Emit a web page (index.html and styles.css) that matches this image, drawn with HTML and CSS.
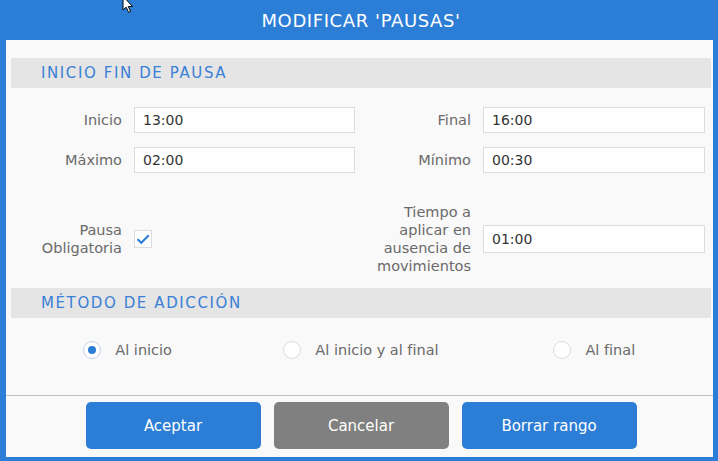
FILE: index.html
```html
<!DOCTYPE html>
<html lang="es">
<head>
<meta charset="utf-8">
<title>Modificar 'Pausas'</title>
<link rel="stylesheet" href="styles.css">
</head>
<body>
<div class="dialog">
  <header class="dialog-header">MODIFICAR 'PAUSAS'</header>
  <div class="dialog-body">
    <div class="section-bar">INICIO FIN DE PAUSA</div>
    <div class="form-grid">
      <label class="lbl">Inicio</label>
      <input class="field" type="text" value="13:00">
      <label class="lbl">Final</label>
      <input class="field" type="text" value="16:00">

      <label class="lbl">Máximo</label>
      <input class="field" type="text" value="02:00">
      <label class="lbl">Mínimo</label>
      <input class="field" type="text" value="00:30">

      <label class="lbl row3">Pausa<br>Obligatoria</label>
      <div class="row3 check-cell">
        <span class="checkbox">
          <svg width="16" height="16" viewBox="0 0 16 16"><path d="M2.5 8.2 L6.3 11.8 L13.8 4.3" fill="none" stroke="#2b7dd5" stroke-width="2"/></svg>
        </span>
      </div>
      <label class="lbl row3 tall">Tiempo a aplicar en ausencia de movimientos</label>
      <input class="field field-tall row3" type="text" value="01:00">
    </div>

    <div class="section-bar second">MÉTODO DE ADICCIÓN</div>
    <div class="radio-row">
      <div class="radio-cell"><span class="radio checked"></span><span class="radio-label">Al inicio</span></div>
      <div class="radio-cell"><span class="radio"></span><span class="radio-label">Al inicio y al final</span></div>
      <div class="radio-cell"><span class="radio"></span><span class="radio-label">Al final</span></div>
    </div>
  </div>
  <footer class="dialog-footer">
    <button class="btn btn-blue">Aceptar</button>
    <button class="btn btn-gray">Cancelar</button>
    <button class="btn btn-blue">Borrar rango</button>
  </footer>
</div>
<svg class="cursor" width="14" height="16" viewBox="0 0 14 16"><path d="M1 -4 L1 10 L4.2 7.2 L6.6 12.4 L8.6 11.5 L6.3 6.5 L10.5 6.5 Z" fill="#fff" stroke="#000" stroke-width="1"/></svg>
</body>
</html>
```
FILE: styles.css
```css
* { box-sizing: border-box; }
html, body { margin: 0; padding: 0; }
body {
  width: 718px;
  height: 461px;
  font-family: "DejaVu Sans", "Liberation Sans", sans-serif;
  background: #2b7dd5;
  position: relative;
  overflow: hidden;
}
.dialog {
  width: 718px;
  height: 461px;
  background: #2b7dd5;
  padding: 0 5px 4px 6px;
  display: flex;
  flex-direction: column;
}
.dialog-header {
  height: 40px;
  flex: none;
  display: flex;
  align-items: center;
  justify-content: center;
  color: #fff;
  font-size: 18px;
  letter-spacing: 0.6px;
  padding-left: 3px;
}
.dialog-body {
  background: #f9f9f9;
  padding: 18px 2px 0 5px;
  flex: none;
  height: 356px;
  border-bottom: 1px solid #c2c2c2;
}
.section-bar {
  height: 30px;
  background: #e5e5e5;
  color: #3a80d6;
  font-size: 15px;
  letter-spacing: 1.6px;
  display: flex;
  align-items: center;
  padding-left: 30px;
}
.section-bar.second { margin-top: 13px; }
.form-grid {
  display: grid;
  grid-template-columns: 111px 221px 104px 222px;
  column-gap: 12px;
  row-gap: 14px;
  margin-top: 19px;
  align-items: center;
}
.lbl {
  text-align: right;
  color: #6a6a6a;
  font-size: 14.5px;
  line-height: 18px;
}
.field {
  height: 26px;
  border: 1px solid #dcdcdc;
  background: #fff;
  font-family: inherit;
  font-size: 14px;
  color: #333;
  padding: 0 8px;
  width: 100%;
  margin: 0;
  outline: none;
}
.field-tall { height: 28px; }
.row3 { margin-top: 16px; }
.check-cell { display: flex; align-items: center; }
.checkbox {
  width: 18px;
  height: 18px;
  border: 1px solid #dcdcdc;
  background: #fff;
  display: flex;
  align-items: center;
  justify-content: center;
}
.checkbox svg { display: block; }
.radio-row {
  display: grid;
  grid-template-columns: repeat(3, 1fr);
  height: 64px;
  align-items: center;
}
.radio-cell {
  display: flex;
  align-items: center;
  justify-content: center;
  gap: 14px;
}
.radio {
  width: 18px;
  height: 18px;
  border-radius: 50%;
  border: 1px solid #dcdcdc;
  background: #fff;
  position: relative;
  flex: none;
}
.radio.checked { border-color: #c6d2e2; }
.radio.checked::after {
  content: "";
  position: absolute;
  left: 4px;
  top: 4px;
  width: 8px;
  height: 8px;
  border-radius: 50%;
  background: #2b7dd5;
}
.radio-label {
  font-size: 14.5px;
  color: #6a6a6a;
}
.dialog-footer {
  flex: 1;
  background: #f9f9f9;
  display: flex;
  justify-content: center;
  gap: 13px;
  padding-top: 6px;
  padding-left: 3px;
}
.btn {
  width: 175px;
  height: 47px;
  border: none;
  border-radius: 5px;
  color: #fff;
  font-family: inherit;
  font-size: 15px;
  margin: 0;
}
.btn-blue { background: #2b7dd5; }
.btn-gray { background: #808080; }
.cursor {
  position: absolute;
  left: 122px;
  top: 0;
}
```
